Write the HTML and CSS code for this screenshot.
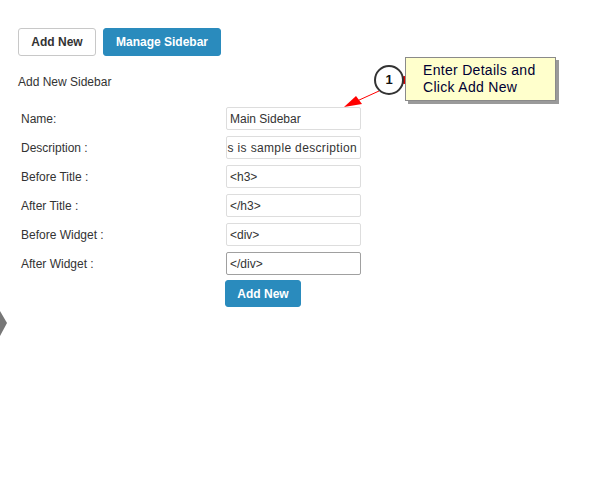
FILE: index.html
```html
<!DOCTYPE html>
<html>
<head>
<meta charset="utf-8">
<title>Add New Sidebar</title>
<link rel="stylesheet" href="styles.css">
</head>
<body>
<div class="page">
  <div class="toolbar">
    <button class="btn btn-outline">Add New</button>
    <button class="btn btn-primary">Manage Sidebar</button>
  </div>
  <div class="heading">Add New Sidebar</div>
  <form class="form">
    <label class="label">Name:</label>
    <input class="field" type="text" value="Main Sidebar">
    <label class="label">Description :</label>
    <div class="field field-scrolled"><span>s is sample description</span></div>
    <label class="label">Before Title :</label>
    <input class="field" type="text" value="&lt;h3&gt;">
    <label class="label">After Title :</label>
    <input class="field" type="text" value="&lt;/h3&gt;">
    <label class="label">Before Widget :</label>
    <input class="field" type="text" value="&lt;div&gt;">
    <label class="label">After Widget :</label>
    <input class="field field-active" type="text" value="&lt;/div&gt;">
  </form>
  <button class="btn btn-primary btn-submit">Add New</button>
</div>

<!-- step marker pointing at the Name field -->
<svg class="pointer" width="589" height="486" viewBox="0 0 589 486">
  <line x1="379" y1="91" x2="357" y2="101" stroke="#ff0000" stroke-width="1"/>
  <polygon points="344,107 356,96 362,104" fill="#ff0000"/>
  <circle cx="405" cy="80" r="4" fill="#e00000"/>
  <circle cx="389" cy="80" r="14" fill="#ffffff" stroke="#333333" stroke-width="2"/>
  <polygon points="0,311 7,323 0,336" fill="#777777"/>
</svg>
<div class="step-num">1</div>
<div class="note">Enter Details and<br>Click Add New</div>
</body>
</html>
```
FILE: styles.css
```css
html, body {
  margin: 0;
  padding: 0;
  background: #ffffff;
}

body {
  width: 589px;
  height: 486px;
  overflow: hidden;
  position: relative;
  font-family: "Liberation Sans", Arial, sans-serif;
  font-size: 12px;
  color: #333333;
}

.page {
  padding: 28px 0 0 18px;
}

.toolbar {
  display: flex;
  gap: 7px;
}

.btn {
  font-family: "Liberation Sans", Arial, sans-serif;
  font-size: 12px;
  font-weight: bold;
  height: 28px;
  border-radius: 3px;
  padding: 0;
  cursor: pointer;
}

.btn-outline {
  width: 78px;
  background: #ffffff;
  border: 1px solid #c8c8c8;
  color: #333333;
}

.btn-primary {
  width: 118px;
  background: #2a8bbd;
  border: 1px solid #2a8bbd;
  color: #ffffff;
}

.heading {
  margin-top: 19px;
  line-height: 14px;
}

.form {
  margin: 18px 0 0;
  display: grid;
  grid-template-columns: 208px 135px;
  row-gap: 6px;
  align-items: center;
}

.label {
  padding-left: 3px;
  line-height: 14px;
}

.field {
  box-sizing: border-box;
  width: 135px;
  height: 23px;
  margin: 0;
  padding: 0 3px;
  border: 1px solid #dddddd;
  border-radius: 2px;
  font-family: "Liberation Sans", Arial, sans-serif;
  font-size: 12px;
  color: #333333;
  background: #ffffff;
  outline: none;
}

/* long value scrolled so its tail stays in view */
.field-scrolled {
  display: flex;
  align-items: center;
  justify-content: flex-end;
  overflow: hidden;
  white-space: nowrap;
  padding: 0 3px 0 0;
  letter-spacing: 0.35px;
}

.field-active {
  border-color: #a0a0a0;
}

.btn-submit {
  display: block;
  width: 76px;
  height: 27px;
  margin: 5px 0 0 207px;
}

.pointer {
  position: absolute;
  left: 0;
  top: 0;
  pointer-events: none;
}

.step-num {
  position: absolute;
  left: 375px;
  top: 72px;
  width: 28px;
  text-align: center;
  font-size: 13px;
  font-weight: bold;
  line-height: 16px;
  color: #111111;
}

.note {
  position: absolute;
  left: 405px;
  top: 57px;
  width: 151px;
  height: 44px;
  box-sizing: border-box;
  padding: 4px 0 0 17px;
  background: #ffffcc;
  border: 1px solid #8a8a8a;
  box-shadow: 3px 3px 0 #9a9a9a;
  font-size: 14px;
  letter-spacing: 0.3px;
  line-height: 17px;
  color: #000033;
}
```
